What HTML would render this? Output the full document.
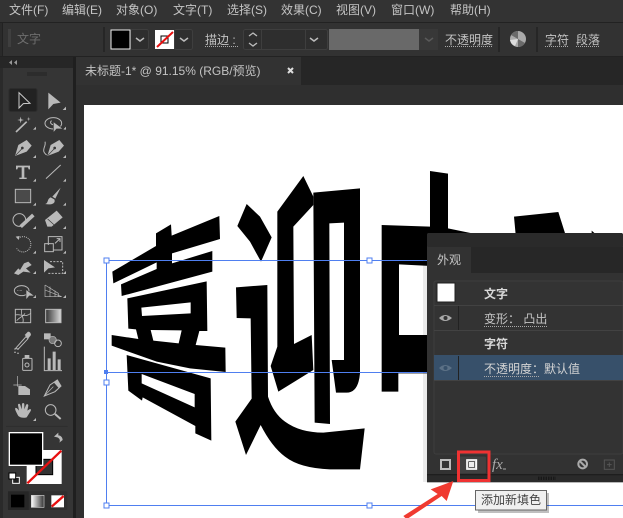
<!DOCTYPE html>
<html><head><meta charset="utf-8"><style>
html,body{margin:0;padding:0;background:#323232;width:623px;height:518px;overflow:hidden}
svg{display:block}
text{font-family:"Liberation Sans","Noto Sans CJK SC",sans-serif;font-size:12px;fill:#c4c4c4}
.u{stroke:#aaa;stroke-width:1;stroke-dasharray:1 1;fill:none}
.t{fill:#b9b9b9;stroke:none}
.s{fill:none;stroke:#b9b9b9;stroke-width:3}
.f{fill:#b9b9b9}
</style></head><body>
<svg width="623" height="518" viewBox="0 0 623 518" xmlns="http://www.w3.org/2000/svg">
<rect width="623" height="518" fill="#323232"/>
<!-- menu -->
<rect width="623" height="22" fill="#333"/>
<text x="9" y="14">文件(F)</text><text x="62" y="14">编辑(E)</text><text x="116" y="14">对象(O)</text><text x="173" y="14">文字(T)</text><text x="227" y="14">选择(S)</text><text x="281" y="14">效果(C)</text><text x="336" y="14">视图(V)</text><text x="391" y="14">窗口(W)</text><text x="450" y="14">帮助(H)</text>
<!-- control bar -->
<rect x="0" y="22" width="623" height="1" fill="#222"/>
<rect x="0" y="23" width="2" height="33" fill="#2a2a2a"/>
<rect x="2" y="23" width="621" height="33" fill="#323232"/>
<rect x="2" y="23" width="1" height="33" fill="#222"/>
<rect x="0" y="56" width="623" height="1" fill="#222"/>
<path d="M8 30h3M8 32h3M8 34h3M8 36h3M8 38h3M8 40h3M8 42h3M8 44h3M8 46h3" stroke="#4c4c4c"/>
<text x="17" y="43" style="fill:#6e6e6e">文字</text>
<rect x="103" y="27" width="2" height="25" fill="#262626"/>
<rect x="130.500" y="29.500" width="18" height="20" rx="2" fill="#2e2e2e" stroke="#3e3e3e"/>
<rect x="111" y="30" width="19" height="19" fill="#000" stroke="#eee"/>
<path d="M136 38l4 3 4-3" fill="none" stroke="#bbb" stroke-width="1.500"/>
<rect x="174.500" y="29.500" width="18" height="20" rx="2" fill="#2e2e2e" stroke="#3e3e3e"/>
<rect x="155" y="30" width="19" height="19" fill="#fff"/>
<rect x="161" y="36" width="7" height="7" fill="#fff" stroke="#000"/>
<path d="M157 47l16-15" stroke="#e81010" stroke-width="2"/>
<path d="M180 38l4 3 4-3" fill="none" stroke="#bbb" stroke-width="1.500"/>
<text x="205" y="44">描边 :</text><path class="u" d="M205 46.500h33"/>
<rect x="243.500" y="29.500" width="84" height="20" rx="2" fill="#2e2e2e" stroke="#3e3e3e"/>
<path d="M261.500 30v19M305.500 30v19" stroke="#3e3e3e"/>
<path d="M249 36l4-3 4 3M249 43l4 3 4-3" fill="none" stroke="#bbb" stroke-width="1.300"/>
<path d="M310 38l4 3 4-3" fill="none" stroke="#bbb" stroke-width="1.500"/>
<rect x="329" y="29" width="90" height="21" fill="#696969"/>
<rect x="419" y="29" width="19" height="21" fill="#383838"/>
<path d="M425 38l4 3 4-3" fill="none" stroke="#5a5a5a" stroke-width="1.500"/>
<text x="445" y="44">不透明度</text><path class="u" d="M445 46.500h48"/>
<rect x="498" y="27" width="2" height="25" fill="#262626"/>
<circle cx="518" cy="39" r="8" fill="#aaa"/><path d="M518 39l-7-4a8 8 0 0 1 7-4zM518 39l7 4a8 8 0 0 1-7 4z" fill="#6a6a6a"/><path d="M518 39l-3 7a8 8 0 0 1-5-6z" fill="#ddd"/>
<rect x="536" y="27" width="2" height="25" fill="#262626"/>
<text x="545" y="44">字符</text><path class="u" d="M545 46.500h24"/>
<text x="576" y="44">段落</text><path class="u" d="M576 46.500h24"/>
<!-- tab bar & canvas -->
<rect x="73" y="57" width="550" height="28" fill="#262626"/>
<rect x="76" y="57" width="225" height="28" fill="#323232"/>
<rect x="73" y="57" width="3" height="461" fill="#1f1f1f"/>
<rect x="76" y="85" width="547" height="433" fill="#2f2f2f"/>
<text x="85" y="75">未标题-1*  @ 91.15% (RGB/预览)</text>
<path d="M288 68l5 5M293 68l-5 5" stroke="#ddd" stroke-width="2"/>
<rect x="84" y="105" width="539" height="413" fill="#fff"/>
<!-- toolbar chrome -->
<rect x="0" y="57" width="73" height="11" fill="#262626"/>
<path d="M12 60l-3 2.500 3 2.500zM17 60l-3 2.500 3 2.500z" fill="#999"/>
<rect x="0" y="68" width="3" height="450" fill="#2a2a2a"/>
<rect x="3" y="68" width="70" height="450" fill="#353535"/>
<path d="M28 72v4M30 72v4M32 72v4M34 72v4M36 72v4M38 72v4M40 72v4M42 72v4M44 72v4M46 72v4" stroke="#222"/>
<rect x="9" y="88.500" width="28" height="23" rx="2" fill="#222" stroke="#2c2c2c"/>
<!-- artwork -->
<g transform="translate(80,170) scale(.33333)" fill="#000">
<polygon points="97,305 228,228 228,190 273,163 275,197 418,138 420,207 276,250 276,280 397,243 397,305 125,378 123,343 230,297 230,277 100,340"/>
<path fill-rule="evenodd" d="M142,385 380,334 382,483 358,483 347,525 436,533 437,606 330,595 230,575 95,527 95,495 175,507 168,478 145,476ZM184,413 332,397 332,430 186,438ZM212,480 305,481 296,520 220,512Z"/>
<path fill-rule="evenodd" d="M140,555 392,625 394,812 346,790 346,768 188,682 186,692 145,662ZM185,612 344,672 344,712 185,640Z"/>
</g>
<g transform="translate(230,160) scale(.33333)" fill="#000">
<polygon points="50,132 90,170 125,232 93,305 60,245 22,198"/>
<path d="M18,382 112,375 114,710Q130,760 165,785 Q210,818 280,818 L404,805 390,928 300,928Q210,925 165,890 Q125,860 92,795 L48,885 16,785 65,716 62,475 20,474Z"/>
<polygon points="220,48 250,110 250,135 190,200 192,552 245,525 250,630 145,695 122,618 142,560 142,155"/>
<path d="M250,98 390,85 390,640Q385,698 350,698L318,698 305,600 342,600 342,188 298,190 300,792 254,788Z"/>
<path fill-rule="evenodd" d="M455,195 600,200 600,33 654,41 654,205 800,235 800,640 505,640 505,695 455,695ZM507,313 640,320 640,525 507,525Z"/>
</g>
<g transform="translate(370,160) scale(.33333)" fill="#000">
<polygon points="432,170 565,156 590,235 438,235"/>
<polygon points="665,212 680,225 665,235"/>
</g>
<!-- selection -->
<g fill="none" stroke="#4f7ff0" stroke-width="1">
<path d="M106.500 260.500H427M106.500 372.500H427M106.500 505.500H623M106.500 260.500V505.500"/>
</g>
<g fill="#fff" stroke="#4f7ff0">
<rect x="104" y="258" width="5" height="5"/><rect x="367" y="258" width="5" height="5"/>
<rect x="104" y="380" width="5" height="5"/><rect x="104" y="503" width="5" height="5"/><rect x="367" y="503" width="5" height="5"/>
</g>
<rect x="104" y="370" width="4" height="4" fill="#4f7ff0"/>
<!-- tool icons row set 1 -->
<g transform="translate(0,80) scale(.33333)">
<path d="M57,38V84L70,71 90,70Z" fill="none" stroke="#ccc" stroke-width="3"/>
<path class="f" d="M145,38V88L160,72 182,68Z"/>
<path class="t" d="M198,80v10h-10zM108,140v9h-9zM198,140v9h-9zM108,225v9h-9zM198,225v9h-9zM108,296v9h-9zM198,296v9h-9zM108,368v9h-9zM198,368v9h-9zM108,438v9h-9zM198,438v9h-9zM108,512v9h-9zM198,512v9h-9zM108,573v9h-9zM198,573v9h-9zM108,645v9h-9zM198,645v9h-9z"/>
<path d="M48,156L80,125" stroke="#b9b9b9" stroke-width="5"/><path d="M62,110l2,8 8,2-8,2-2,8-2-8-8-2 8-2zM86,110l1,6 5,1-5,1-1,6-1-6-5-1 5-1z" fill="#b9b9b9"/>
<ellipse cx="160" cy="130" rx="25" ry="17" class="s"/><path d="M155,122c-8,5 0,14 8,12" class="s"/><path class="f" d="M160,125V158L170,147 190,147Z" stroke="#353535" stroke-width="2"/>
<path class="f" d="M45,228L55,195 80,180 95,197 80,215Z"/><path d="M47,226L66,206" stroke="#353535" stroke-width="2"/><circle cx="67" cy="204" r="4" fill="#353535"/>
<path class="f" d="M142,228L152,195 178,180 192,197 176,215Z"/><path d="M144,226L163,206" stroke="#353535" stroke-width="2"/><circle cx="164" cy="204" r="4" fill="#353535"/><path d="M140,225C120,210 140,200 135,185" class="s"/>
<path d="M48,257H90V268H86L84,262H73V293H80V297H58V293H65V262H54L52,268H48Z" class="f"/>
<path d="M138,296L182,255" stroke="#b9b9b9" stroke-width="3"/>
<rect x="46" y="328" width="46" height="40" fill="#4a4a4a" stroke="#b9b9b9" stroke-width="3"/>
<path class="f" d="M182,323L157,350 166,356ZM152,352C140,358 146,370 135,372 155,376 168,370 163,358Z"/>
<circle cx="58" cy="420" r="19" class="s"/><path d="M62,440L100,405" stroke="#b9b9b9" stroke-width="11"/>
<path class="f" d="M135,420L170,392 188,412 155,440 142,440Z"/><path d="M143,417L164,436" stroke="#353535" stroke-width="2"/>
<path d="M55,475A23,23 0 1 1 50,505" fill="none" stroke="#b9b9b9" stroke-width="3" stroke-dasharray="3 3"/><path d="M47,470l12,-2 -3,12z" class="f"/>
<path d="M145,495V470H186V510H160" class="s"/><rect x="134" y="491" width="26" height="24" class="s"/><path d="M165,490l14-13M170,476h10v10" class="s"/>
<path d="M42,580L55,565 60,570 72,550 85,545 95,555 78,565 92,578 70,575 55,585Z" class="f"/>
<path class="f" d="M132,540V578L145,565 165,562Z"/><path d="M150,545H188V580H145" fill="none" stroke="#b9b9b9" stroke-width="3" stroke-dasharray="6 4"/>
<ellipse cx="65" cy="632" rx="22" ry="15" class="s"/><path class="f" d="M78,628V660L88,648 104,648Z" stroke="#353535" stroke-width="2"/><path d="M52,632h16" stroke="#b9b9b9" stroke-dasharray="2 2" stroke-width="2"/>
<path d="M135,615V650H185M135,615L175,640V650M135,630L185,650M150,620V650M165,632V650" class="s" style="stroke-width:2"/>
</g>
<!-- tool icons row set 2 -->
<g transform="translate(0,290) scale(.33333)">
<rect x="46" y="58" width="46" height="40" fill="none" stroke="#b9b9b9" stroke-width="3"/>
<path d="M46,75C60,70 75,85 92,70M65,58C60,75 75,85 68,98M50,92C60,80 70,80 75,70" fill="none" stroke="#b9b9b9" stroke-width="2.500"/>
<defs><linearGradient id="g1"><stop offset="0" stop-color="#333"/><stop offset="1" stop-color="#ddd"/></linearGradient><linearGradient id="g2"><stop offset="0" stop-color="#fff"/><stop offset="1" stop-color="#333"/></linearGradient></defs>
<rect x="137" y="58" width="46" height="40" fill="url(#g1)" stroke="#b9b9b9" stroke-width="3"/>
<path d="M47,175L78,140 84,146 54,178Z" fill="none" stroke="#b9b9b9" stroke-width="3"/><path class="f" d="M74,135L84,125Q92,125 93,135L85,145 Z"/>
<rect x="132" y="130" width="20" height="18" class="f"/><circle cx="158" cy="150" r="11" fill="#777" stroke="#b9b9b9" stroke-width="2"/><circle cx="174" cy="160" r="10" class="s"/>
<path d="M43,175h4v4h-4zM52,175h4v4h-4zM43,185h4v4h-4zM52,188h4v4h-4z" class="f"/>
<rect x="68" y="205" width="28" height="36" rx="2" class="s"/><circle cx="81" cy="225" r="6" class="s"/><rect x="74" y="195" width="14" height="9" class="f"/>
<path d="M133,170V242H186" class="s"/><path class="f" d="M143,205h9v35h-9zM158,185h9v55h-9zM173,208h9v32h-9z"/>
<path d="M52,258V290M40,285H65" stroke="#b9b9b9" stroke-width="2"/><path class="f" d="M55,288H75L90,298V315H55Z"/>
<path d="M133,318L150,285 172,270 183,288 165,305Z" class="s"/><path d="M133,318L160,290" stroke="#b9b9b9" stroke-width="2"/><path class="f" d="M172,270L183,288 176,294 162,278Z"/>
<path class="f" d="M55,378C48,365 44,358 46,354 50,352 54,358 57,362L54,345C54,340 60,340 61,345L65,358 66,342C67,338 72,338 73,342V358L78,345C80,341 85,342 85,347L82,362 88,358C92,355 94,360 92,363L80,382 Q65,386 55,378Z"/>
<circle cx="152" cy="360" r="16" class="s"/><path d="M165,372L182,387" stroke="#b9b9b9" stroke-width="6"/>
<path class="t" d="M108,384v9h-9z"/>
<rect x="18" y="408" width="185" height="2" fill="#2a2a2a"/>
<path d="M175,428L162,440 172,442C178,445 182,450 178,458L188,450C188,443 183,436 175,436Z" class="f"/>
<rect x="80" y="480" width="105" height="102" fill="#fff"/>
<rect x="108" y="508" width="50" height="46" fill="#333" stroke="#000" stroke-width="3"/>
<path d="M82,580L184,482" stroke="#e81010" stroke-width="7"/>
<rect x="28" y="428" width="100" height="98" fill="#000" stroke="#fff" stroke-width="4"/>
<rect x="38" y="562" width="20" height="18" fill="#222" stroke="#fff" stroke-width="3"/>
<rect x="27" y="549" width="20" height="18" fill="#fff" stroke="#000" stroke-width="3"/>
<rect x="24" y="604" width="178" height="56" rx="4" fill="#2f2f2f"/>
<rect x="24" y="604" width="62" height="56" fill="#262626"/>
<rect x="33" y="614" width="40" height="38" fill="#000"/>
<rect x="94" y="616" width="38" height="36" fill="url(#g2)" stroke="#ccc" stroke-width="2"/>
<rect x="154" y="616" width="38" height="36" fill="#fff"/>
<path d="M155,650L191,618" stroke="#e81010" stroke-width="7"/>
</g>
<!-- appearance panel -->
<rect x="423" y="234" width="4" height="248" fill="#000" opacity=".08"/>
<rect x="427" y="233" width="196" height="249" rx="2" fill="#323232"/>
<rect x="427" y="233" width="196" height="14" rx="2" fill="#2a2a2a"/>
<rect x="427" y="247" width="196" height="26" fill="#272727"/>
<rect x="427" y="247" width="44" height="27" fill="#323232"/>
<text x="437" y="264">外观</text>
<rect x="434" y="281" width="189" height="173" rx="2" fill="#333" stroke="#3e3e3e"/>
<rect x="437" y="283" width="18" height="19" fill="#fff" stroke="#222"/>
<path d="M434 305.500h189M434 330.500h189M434 380.500h189" stroke="#424242"/>
<rect x="434" y="355" width="189" height="25" fill="#37506a"/>
<path d="M458.500 306v24M458.500 356v24" stroke="#222"/>
<path d="M439 318Q445 312 452 318Q445 324 439 318Z" fill="#aaa"/><circle cx="445.500" cy="318" r="2" fill="#333"/>
<path d="M439 368Q445 362 452 368Q445 374 439 368Z" fill="#5c7186"/><circle cx="445.500" cy="368" r="2" fill="#37506a"/>
<text x="484" y="298" font-weight="bold" style="fill:#d8d8d8">文字</text>
<text x="484" y="323">变形： 凸出</text><path class="u" d="M484 326.500h63"/>
<text x="484" y="348" font-weight="bold" style="fill:#d8d8d8">字符</text>
<text x="484" y="373" style="fill:#d4d4d4">不透明度：默认值</text><path class="u" d="M484 376.500h56"/>
<!-- panel bottom -->
<g transform="translate(390,430) scale(.33333)">
<rect x="204" y="80" width="84" height="50" rx="4" fill="#414141"/>
<rect x="153" y="90" width="27" height="27" fill="none" stroke="#bbb" stroke-width="6"/>
<rect x="230" y="89" width="30" height="29" fill="#e6e6e6" stroke="#fff" stroke-width="3"/>
<rect x="236" y="95" width="18" height="17" fill="#eee" stroke="#222" stroke-width="2"/>
<circle cx="578" cy="102" r="13" fill="none" stroke="#aaa" stroke-width="6"/><path d="M569,93L587,111" stroke="#aaa" stroke-width="6"/>
<rect x="643" y="90" width="30" height="28" fill="none" stroke="#555" stroke-width="3"/><path d="M658,97v14M651,104h14" stroke="#555" stroke-width="3"/>
<rect x="111" y="132" width="588" height="25" fill="#2a2a2a"/>
<rect x="111" y="132" width="588" height="4" fill="#1e1e1e"/>
<path d="M445,140v10M450,140v10M455,140v10M460,140v10M465,140v10M470,140v10M475,140v10M480,140v10M485,140v10M490,140v10M495,140v10" stroke="#111" stroke-width="2"/>
</g>
<text x="492" y="469" style="font-family:'Liberation Serif',serif;font-style:italic;font-size:15px;fill:#aaa">fx</text>
<path d="M503 469h3" stroke="#aaa"/>
<!-- red highlight -->
<rect x="458.500" y="452" width="30.500" height="28.500" fill="none" stroke="#ef3232" stroke-width="3"/>
<!-- arrow -->
<g transform="translate(390,430) scale(.33333)">
<polygon points="190,153 122,178 143,192 40,258 50,268 155,198 170,213" fill="#f03a30"/>
</g>
<!-- tooltip -->
<rect x="478" y="493" width="71" height="20" fill="#000" opacity=".25"/>
<rect x="475.500" y="490.500" width="71" height="19.500" fill="#f0f0f0" stroke="#666"/>
<text x="481" y="504" style="fill:#444">添加新填色</text>
</svg>
</body></html>
